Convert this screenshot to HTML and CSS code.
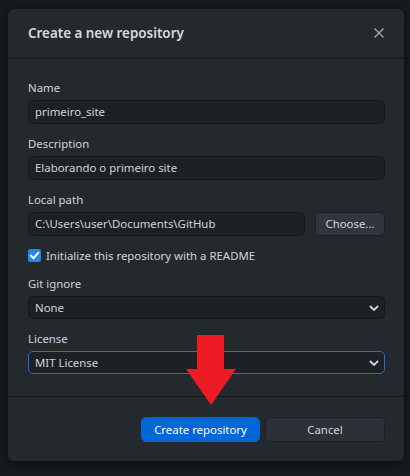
FILE: index.html
```html
<!DOCTYPE html>
<html>
<head>
<meta charset="utf-8">
<link rel="stylesheet" href="styles.css">
</head>
<body>
<div class="backdrop">
  <div class="dialog">
    <header class="dlg-header">
      <h1 class="dlg-title">Create a new repository</h1>
      <svg class="close" width="12" height="12" viewBox="0 0 12 12"><path d="M1.5 1.5 L10.5 10.5 M10.5 1.5 L1.5 10.5" stroke="#a0a6ad" stroke-width="1.4" fill="none"/></svg>
    </header>
    <div class="dlg-body">
      <div class="field">
        <label class="label">Name</label>
        <div class="input">primeiro_site</div>
      </div>
      <div class="field">
        <label class="label">Description</label>
        <div class="input">Elaborando o primeiro site</div>
      </div>
      <div class="field">
        <label class="label">Local path</label>
        <div class="path-row">
          <div class="input grow">C:\Users\user\Documents\GitHub</div>
          <div class="btn btn-choose">Choose...</div>
        </div>
      </div>
      <div class="check-row">
        <span class="checkbox"><svg width="13" height="13" viewBox="0 0 13 13"><path d="M3 6.8 L5.5 9.2 L10.2 3.8" stroke="#fff" stroke-width="2" fill="none" stroke-linecap="square"/></svg></span>
        <span class="check-label">Initialize this repository with a README</span>
      </div>
      <div class="field">
        <label class="label">Git ignore</label>
        <div class="input select">None<svg class="chev" width="10" height="6" viewBox="0 0 10 6"><path d="M1 1 L5 5 L9 1" stroke="#d1d5da" stroke-width="1.8" fill="none"/></svg></div>
      </div>
      <div class="field last">
        <label class="label">License</label>
        <div class="input select focused">MIT License<svg class="chev" width="10" height="6" viewBox="0 0 10 6"><path d="M1 1 L5 5 L9 1" stroke="#d1d5da" stroke-width="1.8" fill="none"/></svg></div>
      </div>
    </div>
    <footer class="dlg-footer">
      <div class="btn btn-primary">Create repository</div>
      <div class="btn btn-cancel">Cancel</div>
    </footer>
    <svg class="arrow" width="52" height="72" viewBox="0 0 52 72"><path d="M12 0 H39 V34 H51 L26 70 L1 34 H12 Z" fill="#ed1c24"/></svg>
  </div>
</div>
</body>
</html>
```
FILE: styles.css
```css
* { box-sizing: border-box; }
html, body { margin: 0; padding: 0; }
body {
  background: #16191d;
  font-family: "Segoe UI", "Noto Sans", "Open Sans", sans-serif;
  width: 410px;
  height: 476px;
  overflow: hidden;
}
.backdrop {
  padding: 9px 6px 0 8px;
}
.dialog {
  position: relative;
  width: 396px;
  height: 452px;
  background: #24292e;
  border-radius: 6px;
  box-shadow: 0 2px 8px rgba(0,0,0,0.45);
  display: flex;
  flex-direction: column;
}
.dlg-header {
  height: 50px;
  display: flex;
  align-items: center;
  justify-content: space-between;
  padding: 0 19px 1px 20px;
  border-bottom: 1px solid #141619;
}
.dlg-title {
  margin: 0;
  font-size: 13.4px;
  font-weight: 600;
  color: #d6dadf;
  letter-spacing: 0;
}
.close { display: block; }
.dlg-body {
  padding: 21px 19px 0 20px;
  height: 338px;
  border-bottom: 1px solid #141619;
}
.field { margin-bottom: 12px; }
.label {
  display: block;
  font-size: 11.4px;
  line-height: 16px;
  color: #d1d5da;
  margin-bottom: 4px;
}
.input {
  height: 24px;
  background: #1d2125;
  border: 1px solid #15181b;
  border-radius: 5px;
  color: #d1d5da;
  font-size: 11.4px;
  line-height: 22px;
  padding: 0 6px;
  white-space: nowrap;
}
.path-row {
  display: flex;
  gap: 10px;
}
.grow { flex: 1; }
.btn {
  height: 25px;
  border-radius: 5px;
  font-size: 11.4px;
  line-height: 23px;
  text-align: center;
  border: 1px solid #1b1f23;
  color: #d1d5da;
}
.btn-choose {
  width: 70px;
  height: 24px;
  line-height: 22px;
  background: #2f363d;
}
.check-row {
  display: flex;
  align-items: center;
  height: 14px;
  margin-bottom: 14px;
}
.checkbox {
  width: 13px;
  height: 13px;
  border-radius: 2px;
  background: #2a84f0;
  display: inline-block;
  margin-right: 5px;
}
.checkbox svg { display: block; }
.check-label {
  font-size: 11.4px;
  color: #d1d5da;
}
.select {
  position: relative;
  height: 23px;
  line-height: 21px;
}
.chev {
  position: absolute;
  right: 5px;
  top: 8px;
}
.focused {
  border: 1px solid #1f6fd8;
}
.dlg-footer {
  flex: 1;
  display: flex;
  justify-content: flex-end;
  align-items: flex-start;
  padding: 20px 19px 0 0;
  gap: 5px;
}
.btn-primary {
  width: 119px;
  background: #0366d6;
  border-color: #0366d6;
  color: #ffffff;
}
.btn-cancel {
  width: 120px;
  background: #2c3137;
  border-color: #1b1f23;
}
.arrow {
  position: absolute;
  left: 177px;
  top: 326px;
}
```
